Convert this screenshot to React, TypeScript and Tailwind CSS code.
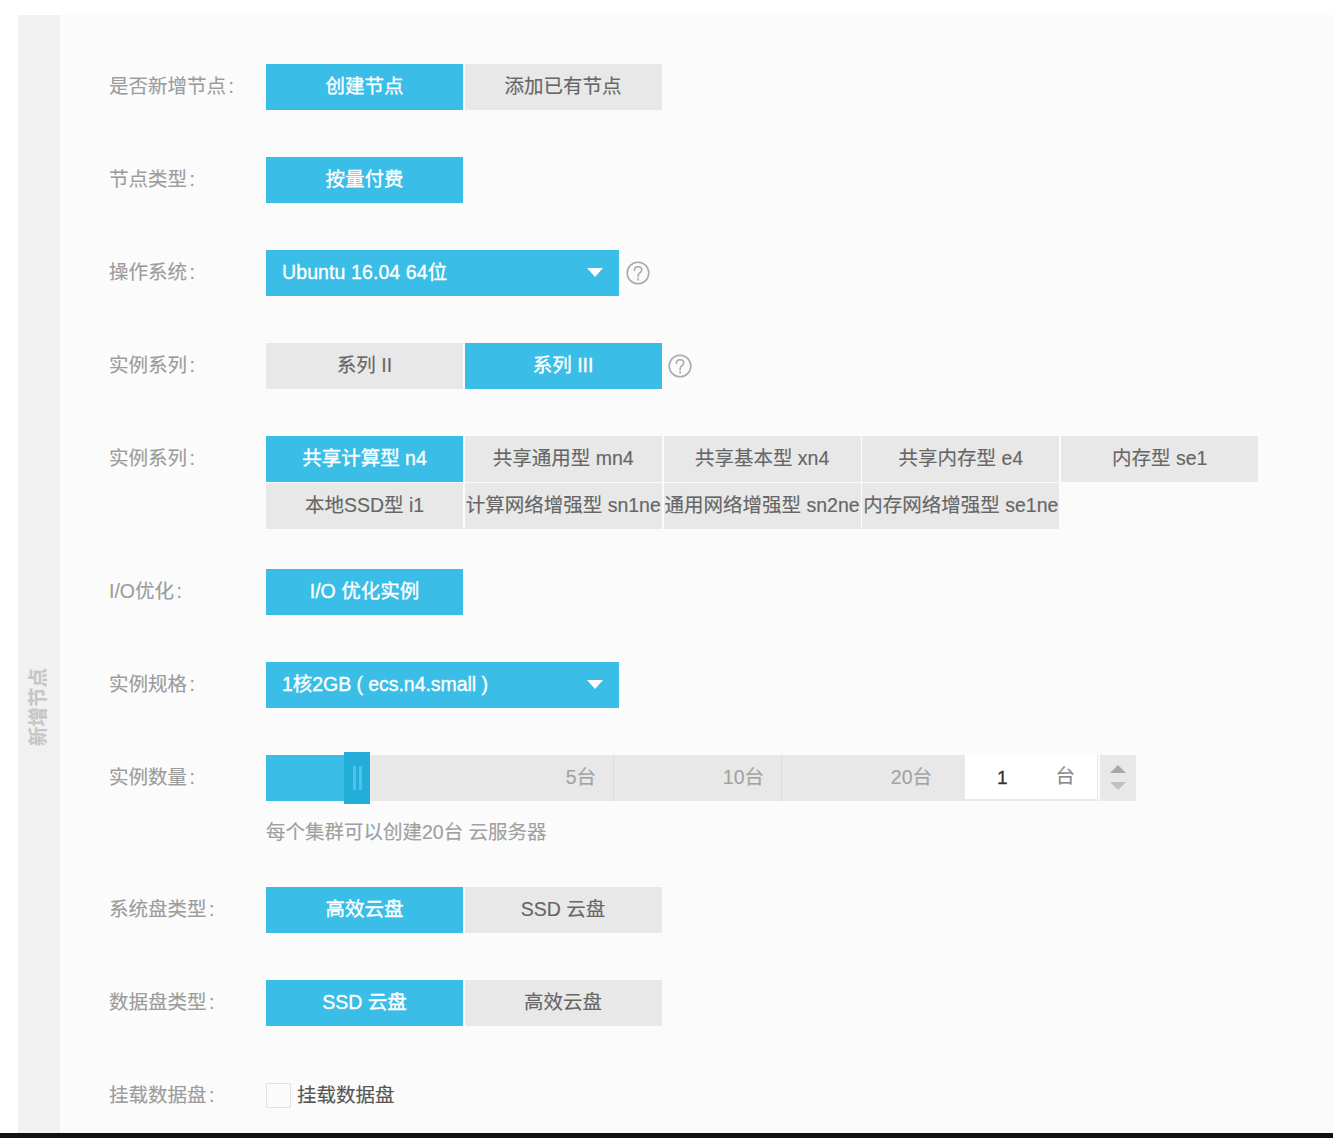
import React from "react";

const font = { fontFamily: '"Liberation Sans","Noto Sans CJK SC",sans-serif' };

function Opt({ text, active }: { text: string; active?: boolean }) {
  return (
    <div
      className={
        "w-[197px] h-[45.5px] flex items-center justify-center whitespace-nowrap " +
        (active ? "bg-[#3abde6] text-white [-webkit-text-stroke:0.35px_#ffffff]" : "bg-[#e8e8e8] text-[#666666]")
      }
    >
      {text}
    </div>
  );
}

function Help({ near }: { near?: boolean }) {
  return (
    <svg
      width="24"
      height="24"
      viewBox="0 0 24 24"
      fill="none"
      stroke="#ababab"
      strokeWidth="1.6"
      className={(near ? "ml-[6px]" : "ml-[7px]") + " shrink-0"}
    >
      <circle cx="12" cy="12" r="10.8" />
      <path d="M8.4 9.4c0-2.2 1.6-3.6 3.7-3.6s3.6 1.4 3.6 3.2c0 2.6-3.4 2.7-3.6 5.8v.8" strokeLinecap="round" />
      <path d="M12.1 17.6v1.4" strokeLinecap="round" />
    </svg>
  );
}

function Select({ text, track }: { text: string; track: string }) {
  return (
    <div className={"w-[353px] h-[45.5px] bg-[#3abde6] text-white [-webkit-text-stroke:0.35px_#ffffff] flex items-center justify-between pl-[16px] pr-[16px] " + track}>
      <span className="whitespace-nowrap">{text}</span>
      <svg width="16" height="9" viewBox="0 0 16 9" className="shrink-0">
        <path d="M0 0h16L8 9z" fill="#ffffff" />
      </svg>
    </div>
  );
}

function Row({ label, mb, children }: { label: string; mb: string; children: React.ReactNode }) {
  return (
    <div className={"flex " + mb}>
      <div className="w-[157px] h-[45.5px] flex items-center text-[#9c9c9c] whitespace-nowrap shrink-0">
        {label}
        <span className="ml-[2.5px]">:</span>
      </div>
      <div className="flex items-start min-w-0">{children}</div>
    </div>
  );
}

function Seg({ w, text, pr, border }: { w: string; text: string; pr: string; border?: boolean }) {
  return (
    <div className={w + " " + pr + " h-full flex items-center justify-end text-[#a3a3a3] " + (border ? "border-r border-[#dcdcdc]" : "")}>
      {text}
    </div>
  );
}

export default function App() {
  return (
    <div style={font} className="h-[1138px] overflow-hidden bg-white flex flex-col text-[19.5px] leading-none [-webkit-text-stroke:0.15px]">
      <div className="h-[15px] shrink-0" />
      <div className="flex-1 min-h-0 flex pl-[18px] overflow-hidden">
        <div className="w-[42px] shrink-0 bg-[#f1f1f1] flex justify-center pt-[653px]">
          <div className="[writing-mode:vertical-rl] [text-orientation:sideways] rotate-180 h-[78px] font-bold text-[#c6c6c6] whitespace-nowrap">
            新增节点
          </div>
        </div>
        <div className="flex-1 bg-[#fbfbfb] pl-[49px] pt-[49px]">
          <Row label="是否新增节点" mb="mb-[47.5px]">
            <div className="flex gap-[1.6px]">
              <Opt text="创建节点" active />
              <Opt text="添加已有节点" />
            </div>
          </Row>
          <Row label="节点类型" mb="mb-[47.5px]">
            <Opt text="按量付费" active />
          </Row>
          <Row label="操作系统" mb="mb-[47.5px]">
            <div className="flex items-center">
              <Select text="Ubuntu 16.04 64位" track="tracking-[0.1px]" />
              <Help />
            </div>
          </Row>
          <Row label="实例系列" mb="mb-[47.5px]">
            <div className="flex items-center">
              <div className="flex gap-[1.6px]">
                <Opt text="系列 II" />
                <Opt text="系列 III" active />
              </div>
              <Help near />
            </div>
          </Row>
          <Row label="实例系列" mb="mb-[40.5px]">
            <div className="w-[1000px] flex flex-wrap gap-x-[1.8px] gap-y-[1.5px]">
              <Opt text="共享计算型 n4" active />
              <Opt text="共享通用型 mn4" />
              <Opt text="共享基本型 xn4" />
              <Opt text="共享内存型 e4" />
              <Opt text="内存型 se1" />
              <Opt text="本地SSD型 i1" />
              <Opt text="计算网络增强型 sn1ne" />
              <Opt text="通用网络增强型 sn2ne" />
              <Opt text="内存网络增强型 se1ne" />
            </div>
          </Row>
          <Row label="I/O优化" mb="mb-[47.5px]">
            <Opt text="I/O 优化实例" active />
          </Row>
          <Row label="实例规格" mb="mb-[47.5px]">
            <Select text="1核2GB ( ecs.n4.small )" track="tracking-[-0.05px]" />
          </Row>
          <Row label="实例数量" mb="mb-[44.5px]">
            <div>
              <div className="flex items-center h-[45.5px]">
                <div className="relative w-[699px] h-[45.5px] bg-[#e8e8e8] flex">
                  <div className="w-[78px] h-full bg-[#3abde6]" />
                  <Seg w="w-[270px]" pr="pr-[17px]" text="5台" border />
                  <Seg w="w-[168px]" pr="pr-[17px]" text="10台" border />
                  <Seg w="w-[183px]" pr="pr-[33px]" text="20台" />
                  <div className="absolute left-[78px] top-[-3px] w-[26px] h-[51.5px] bg-[#23add8] flex items-center justify-center gap-[3px]">
                    <div className="w-[3px] h-[24px] bg-[#4fc2e6]" />
                    <div className="w-[3px] h-[24px] bg-[#4fc2e6]" />
                  </div>
                </div>
                <div className="w-[133px] h-[45.5px] bg-[#e8e8e8] flex items-start">
                  <div className="w-[132px] h-[44px] bg-white flex items-center justify-between pl-[32px] pr-[22px]">
                    <span className="text-[#333333] text-[19px] [-webkit-text-stroke:0.3px]">1</span>
                    <span className="text-[#8a8a8a]">台</span>
                  </div>
                </div>
                <div className="ml-[2px] w-[36px] h-[45.5px] bg-[#e8e8e8] flex flex-col items-center justify-center gap-[9px]">
                  <svg width="16" height="8" viewBox="0 0 16 8">
                    <path d="M8 0l8 8H0z" fill="#a8a8a8" />
                  </svg>
                  <svg width="16" height="8" viewBox="0 0 16 8">
                    <path d="M0 0h16L8 8z" fill="#c0c0c0" />
                  </svg>
                </div>
              </div>
              <div className="mt-[22px] h-[20px] flex items-center text-[#a0a0a0] whitespace-nowrap">每个集群可以创建20台 云服务器</div>
            </div>
          </Row>
          <Row label="系统盘类型" mb="mb-[47.5px]">
            <div className="flex gap-[1.6px]">
              <Opt text="高效云盘" active />
              <Opt text="SSD 云盘" />
            </div>
          </Row>
          <Row label="数据盘类型" mb="mb-[47.5px]">
            <div className="flex gap-[1.6px]">
              <Opt text="SSD 云盘" active />
              <Opt text="高效云盘" />
            </div>
          </Row>
          <Row label="挂载数据盘" mb="mb-0">
            <label className="flex items-center h-[45.5px] text-[#555555] whitespace-nowrap">
              <span className="w-[25px] h-[25px] border border-[#e2e2e2] bg-[#fbfbfb] mr-[6px] rounded-[1px]" />
              挂载数据盘
            </label>
          </Row>
        </div>
      </div>
      <div className="h-[5px] shrink-0 bg-[#111111]" />
    </div>
  );
}
